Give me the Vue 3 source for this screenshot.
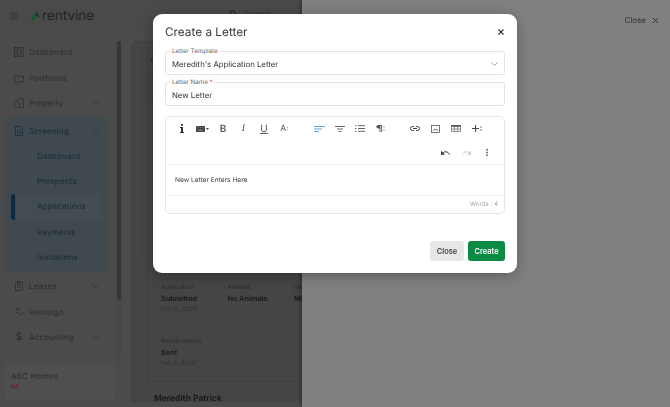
<script setup>
const details = [
  { label: "Application", value: "Submitted", date: "Dec 9, 2025" },
  { label: "Animals", value: "No Animals", date: "" },
  { label: "Identity", value: "Missing", date: "" },
];
</script>

<template>
  <div class="page">
    <div class="backdrop">
      <header class="topbar">
        <svg class="burger" width="8" height="6" viewBox="0 0 8 6"><path d="M0 .5h8M0 3h8M0 5.500h8" stroke="#2c2c2c" stroke-width=".8" /></svg>
        <svg class="logo" width="9" height="12" viewBox="0 0 9 14" preserveAspectRatio="none"><path d="M5 0l4 9-3-2-1 1z" fill="#123a22" /><path d="M4.600 2L1 9 0 14l3-2 2-4z" fill="#0b5a2c" /></svg>
        <span class="brand">rentvine</span>
        <div class="search">
          <svg width="8" height="8" viewBox="0 0 8 8"><circle cx="3.500" cy="3.500" r="2.700" fill="none" stroke="#222" /><path d="M5.500 5.500L8 8" stroke="#222" /></svg>
          <span>Search</span>
        </div>
      </header>

      <div class="body">
        <aside class="sidebar">
          <nav class="nav">
            <a class="nav-row">
              <svg width="10" height="10" viewBox="0 0 10 10" fill="none" stroke="#2f2f2f" stroke-width=".8"><rect x=".5" y=".5" width="3.200" height="4" /><rect x="6" y=".5" width="3.200" height="2.800" /><rect x=".5" y="6.500" width="3.200" height="3" /><rect x="6" y="5.500" width="3.200" height="4" /></svg>
              <span>Dashboard</span>
            </a>
            <a class="nav-row">
              <svg width="10" height="10" viewBox="0 0 10 10" fill="none" stroke="#2f2f2f" stroke-width=".8"><path d="M.5 9V2.500h3l1 1h5V9z" /></svg>
              <span>Portfolios</span>
            </a>
            <a class="nav-row">
              <svg width="10" height="10" viewBox="0 0 10 10" fill="none" stroke="#2f2f2f" stroke-width=".8"><path d="M.5 9.500V5l2.500-2 2.500 2v4.500zM3.500 2.500V.8h6v8.700H6" /></svg>
              <span>Property</span>
              <svg class="chev" width="7" height="4" viewBox="0 0 7 4"><path d="M.5.5l3 3 3-3" fill="none" stroke="#2f2f2f" stroke-width=".8" /></svg>
            </a>

            <section class="screening">
              <a class="nav-row head">
                <svg width="10" height="10" viewBox="0 0 10 10" fill="none" stroke="#17293a" stroke-width=".8"><path d="M1.500 .5h4.500l2.500 2.500v6.500h-7z" /><circle cx="5" cy="6" r="1.600" /></svg>
                <span>Screening</span>
                <svg class="chev" width="7" height="4" viewBox="0 0 7 4"><path d="M.5 3.500l3-3 3 3" fill="none" stroke="#2f2f2f" stroke-width=".8" /></svg>
              </a>
              <a class="sub">Dashboard</a>
              <a class="sub">Prospects</a>
              <a class="sub active">Applications</a>
              <a class="sub">Payments</a>
              <a class="sub">Invitations</a>
            </section>

            <a class="nav-row">
              <svg width="10" height="10" viewBox="0 0 10 10" fill="none" stroke="#2f2f2f" stroke-width=".8"><path d="M1.500 1.200h7v8.300h-7zM3.500 .4h3v1.600h-3zM3.200 4.200h3.600M3.200 6.200h3.600" /></svg>
              <span>Leases</span>
              <svg class="chev" width="7" height="4" viewBox="0 0 7 4"><path d="M.5.5l3 3 3-3" fill="none" stroke="#2f2f2f" stroke-width=".8" /></svg>
            </a>
            <a class="nav-row">
              <svg width="10" height="10" viewBox="0 0 10 10" fill="none" stroke="#2f2f2f" stroke-width=".8"><path d="M1.500 1.500h5M1.500 3.500h5M1.500 5.500h3M5 8.500l4-3" /></svg>
              <span>Rentsign</span>
            </a>
            <a class="nav-row">
              <span class="dollar">$</span>
              <span>Accounting</span>
              <svg class="chev" width="7" height="4" viewBox="0 0 7 4"><path d="M.5.5l3 3 3-3" fill="none" stroke="#2f2f2f" stroke-width=".8" /></svg>
            </a>
          </nav>
          <div class="rail"><div class="thumb"></div></div>
          <div class="account">
            <div class="account-name">ABC Homes</div>
            <div class="account-env">QA</div>
          </div>
        </aside>

        <main class="main">
          <div class="card">
            <div class="inner">
              <svg class="back" width="3" height="5" viewBox="0 0 3 5"><path d="M2.700.3L.5 2.500l2.200 2.200" fill="none" stroke="#222" stroke-width=".8" /></svg>
              <div class="tabs"></div>
              <div class="details">
                <div v-for="d in details" :key="d.label" class="detail">
                  <div class="detail-label">{{ d.label }}</div>
                  <div class="detail-value">{{ d.value }}</div>
                  <div class="detail-date">{{ d.date }}</div>
                </div>
              </div>
              <div class="detail history">
                <div class="detail-label">Rental History</div>
                <div class="detail-value">Sent</div>
                <div class="detail-date">Feb 5, 2026</div>
              </div>
            </div>
            <div class="person">Meredith Patrick</div>
          </div>
        </main>
      </div>
    </div>

    <div class="drawer">
      <span>Close</span>
      <svg width="7" height="7" viewBox="0 0 7 7"><path d="M1 1l5 5M6 1L1 6" stroke="#333" stroke-width="1" /></svg>
    </div>

    <div class="modal">
      <div class="modal-head">
        <h2>Create a Letter</h2>
        <svg width="6" height="6" viewBox="0 0 6 6"><path d="M.5.5l5 5M5.500.5l-5 5" stroke="#333" stroke-width="1.100" /></svg>
      </div>

      <div class="field">
        <label>Letter Template</label>
        <span>Meredith's Application Letter</span>
        <svg width="7" height="4" viewBox="0 0 7 4"><path d="M.5.5l3 3 3-3" fill="none" stroke="#888" stroke-width=".8" /></svg>
      </div>
      <div class="field">
        <label>Letter Name <b>*</b></label>
        <span>New Letter</span>
      </div>

      <div class="editor">
        <div class="tools">
          <div class="group">
            <span class="cell"><svg width="4" height="9" viewBox="0 0 4 9"><path d="M1 0h2v1.800H1zM0 3h3v5h1v1H0V8h1V4H0z" fill="#333" /></svg></span>
            <span class="cell gap1">
              <svg width="9" height="6" viewBox="0 0 9 6"><rect width="9" height="6" rx=".8" fill="#444" /><path d="M1.500 1.700h1M4 1.700h1M6.500 1.700h1M2.500 4.300h4" stroke="#bbb" stroke-width=".7" /></svg>
              <svg width="3" height="2" viewBox="0 0 3 2"><path d="M0 0h3L1.500 2z" fill="#444" /></svg>
            </span>
            <span class="cell bold">B</span>
            <span class="cell ital">I</span>
            <span class="cell under">U</span>
            <span class="cell small-a">A<small>:</small></span>
          </div>
          <div class="group">
            <span class="cell"><svg width="11" height="6" viewBox="0 0 11 6"><path d="M0 .5h11M0 3h8M0 5.500h5" stroke="#4c9be8" stroke-width=".9" /></svg></span>
            <span class="cell"><svg width="10" height="6" viewBox="0 0 10 6"><path d="M0 .5h10M2 3h6M3.500 5.500h3" stroke="#555" stroke-width=".9" /></svg></span>
            <span class="cell"><svg width="10" height="7" viewBox="0 0 10 7"><path d="M0 .7h1.500M0 3.500h1.500M0 6.300h1.500M3 .7h7M3 3.500h7M3 6.300h7" stroke="#555" stroke-width=".9" /></svg></span>
            <span class="cell"><svg width="9" height="7" viewBox="0 0 9 7"><path d="M3.500 0H2.200a1.800 1.800 0 000 3.600h1.300V7h.9V.8h.8V7h.9V0zM7.500 1.500h1v1h-1zM7.500 4.500h1v1h-1z" fill="#555" /></svg></span>
          </div>
          <div class="group">
            <span class="cell"><svg width="10" height="5" viewBox="0 0 10 5" fill="none" stroke="#444" stroke-width="1"><path d="M4 .5H2.500a2 2 0 000 4H4M6 .5h1.500a2 2 0 010 4H6M3 2.500h4" /></svg></span>
            <span class="cell"><svg width="9" height="8" viewBox="0 0 9 8" fill="none" stroke="#555" stroke-width=".8"><rect x=".5" y=".5" width="8" height="7" /><path d="M2 6l1.700-2L5 5.200l.9-.8L7.200 6" /></svg></span>
            <span class="cell"><svg width="10" height="7" viewBox="0 0 10 7"><rect width="10" height="1.800" fill="#555" /><path d="M.4 1.800V7M3.400 1.800V7M6.600 1.800V7M9.600 1.800V7M0 4h10M0 6.600h10" stroke="#666" stroke-width=".7" /></svg></span>
            <span class="cell plus">
              <svg width="10" height="7" viewBox="0 0 10 7"><path d="M0 3.500h7M3.500 0v7" stroke="#444" /><path d="M8.500 1.500h1.200v1.200H8.500zM8.500 4.300h1.200v1.200H8.500z" fill="#555" /></svg>
            </span>
          </div>
        </div>
        <div class="tools second">
          <span class="cell"><svg width="9" height="5" viewBox="0 0 9 5"><path d="M0 .8v4h4z" fill="#333" /><path d="M1.500 3.500C3.500 1 6.500 1 8.500 4.500" fill="none" stroke="#333" stroke-width="1" /></svg></span>
          <span class="cell"><svg width="9" height="5" viewBox="0 0 9 5"><path d="M9 .8v4H5z" fill="#c8c8c8" /><path d="M7.500 3.500C5.500 1 2.500 1 .5 4.500" fill="none" stroke="#c8c8c8" stroke-width="1" /></svg></span>
          <span class="cell"><svg width="2" height="7" viewBox="0 0 2 7"><path d="M.2 0h1.600v1.600H.2zM.2 2.700h1.600v1.600H.2zM.2 5.400h1.600V7H.2z" fill="#555" /></svg></span>
        </div>
        <div class="content">New Letter Enters Here</div>
        <div class="status">Words : 4</div>
      </div>

      <div class="actions">
        <button class="btn-close">Close</button>
        <button class="btn-create">Create</button>
      </div>
    </div>
  </div>
</template>

<style scoped>
.page {
  position: relative;
  width: 670px;
  height: 407px;
  overflow: hidden;
  background: #4b4b4b;
  font-family: Inter, "Liberation Sans", sans-serif;
  text-rendering: geometricPrecision;
}

.backdrop {
  height: 100%;
  display: flex;
  flex-direction: column;
  filter: blur(0.4px);
}

.topbar {
  height: 31px;
  flex: none;
  display: flex;
  align-items: center;
  padding-left: 11px;
  background: #4a4a4a;
}

.burger {
  margin-right: 12px;
}

.logo {
  margin-right: 2px;
}

.brand {
  font-size: 13.500px;
  color: #232323;
}

.search {
  margin-left: 135px;
  display: flex;
  align-items: center;
  gap: 7px;
  font-size: 8px;
  color: #333;
  margin-top: -3px;
}

.body {
  flex: 1;
  display: flex;
  min-height: 0;
}

.sidebar {
  position: relative;
  width: 131px;
  flex: none;
  padding: 8.600px 0 0 5px;
  box-sizing: border-box;
}

.nav {
  width: 102px;
}

.nav-row {
  height: 25.400px;
  display: flex;
  align-items: center;
  gap: 5px;
  padding-left: 9px;
  font-size: 8px;
  color: #2c2c2c;
  letter-spacing: 0.2px;
}

.nav-row svg:first-child {
  flex: none;
}

.chev {
  margin-left: auto;
  margin-right: 8px;
}

.dollar {
  width: 10px;
  text-align: center;
  font-size: 10px;
}

.screening {
  background: #40494e;
  border-radius: 5px;
  margin: 1px 0 2px;
  height: 155px;
  box-sizing: border-box;
  padding-top: 1.500px;
}

.head {
  color: #17293a;
}

.sub {
  display: block;
  position: relative;
  height: 25.400px;
  line-height: 25.400px;
  padding-left: 32px;
  font-size: 8px;
  color: #17293a;
  letter-spacing: 0.2px;
}

.sub.active {
  background: #434c51;
  margin: 0 6px 0 11px;
  padding-left: 21px;
  border-radius: 1px;
}

.sub.active::before {
  content: "";
  position: absolute;
  left: -5px;
  top: 0;
  bottom: 0;
  width: 4px;
  border-radius: 3px 0 0 3px;
  background: #0d2a42;
}

.rail {
  position: absolute;
  left: 115px;
  top: 10px;
  width: 7px;
  height: 317px;
  background: #484848;
}

.thumb {
  width: 4px;
  height: 259px;
  margin-left: 2px;
  background: #363636;
  border-radius: 2px;
}

.account {
  position: absolute;
  left: 5px;
  top: 331px;
  width: 110px;
  height: 39px;
  box-sizing: border-box;
  padding: 9px 6px;
  background: #4f4f4f;
  border-radius: 5px;
}

.account-name {
  font-size: 8px;
  line-height: 10px;
  letter-spacing: 0.2px;
  color: #2c2c2c;
}

.account-env {
  font-size: 5.500px;
  line-height: 7px;
  font-weight: 600;
  color: #6e1f1f;
  margin-top: 3px;
}

.main {
  flex: 1;
  min-width: 0;
  padding-top: 10px;
}

.card {
  height: 361px;
  border: 1px solid #424242;
  border-right: none;
  border-radius: 6px 0 0 0;
  background: #454545;
  box-sizing: border-box;
  padding-left: 15px;
}

.inner {
  height: 340px;
  box-sizing: border-box;
  border-left: 1px solid #3f3f3f;
  border-bottom: 1px solid #3f3f3f;
  padding: 15px 0 0 13px;
}

.back {
  display: block;
  margin-left: -11px;
}

.tabs {
  width: 60px;
  height: 20px;
  margin: 16px 0 0 -13px;
  border: 1px solid #404040;
  border-radius: 3px;
}

.details {
  display: flex;
  margin-top: 184px;
}

.detail {
  width: 66.500px;
  flex: none;
  white-space: nowrap;
}

.detail-label {
  font-size: 6.200px;
  line-height: 8px;
  color: #2b2b2b;
}

.detail-value {
  font-size: 7.200px;
  line-height: 10px;
  font-weight: 700;
  color: #1d1d1d;
  margin-top: 2px;
}

.detail-date {
  font-size: 6.200px;
  line-height: 8px;
  color: #333;
  margin-top: 2px;
}

.history {
  margin-top: 24px;
}

.person {
  margin: 12px 0 0 7px;
  font-size: 8.500px;
  line-height: 11px;
  font-weight: 600;
  color: #161616;
  white-space: nowrap;
}

.drawer {
  position: absolute;
  left: 302px;
  top: 0;
  right: 0;
  bottom: 0;
  background: #808080;
  box-shadow: -2px 0 4px rgba(0, 0, 0, 0.25);
  display: flex;
  justify-content: flex-end;
  align-items: flex-start;
  gap: 6px;
  padding: 15px 11px 0 0;
  font-size: 8px;
  color: #2f2f2f;
}

.drawer svg {
  margin-top: 2px;
}

.modal {
  position: absolute;
  left: 153px;
  top: 14px;
  width: 364px;
  height: 259px;
  box-sizing: border-box;
  padding: 0 12px;
  background: #fff;
  border-radius: 9px;
  box-shadow: 0 3px 14px rgba(0, 0, 0, 0.28);
}

.modal-head {
  height: 37px;
  display: flex;
  align-items: center;
  justify-content: space-between;
  padding: 0 1px 2px 0;
  box-sizing: border-box;
}

.modal-head h2 {
  margin: 0;
  font-size: 11.800px;
  font-weight: 400;
  color: #3a3a3a;
}

.field {
  position: relative;
  height: 24px;
  margin-bottom: 7px;
  display: flex;
  align-items: center;
  justify-content: space-between;
  padding: 1px 6px 0;
  box-sizing: border-box;
  border: 1px solid #e3e3e3;
  border-radius: 3px;
  font-size: 7.800px;
  color: #333;
}

.field label {
  position: absolute;
  left: 5px;
  top: -4px;
  padding: 0 1px;
  background: #fff;
  font-size: 6.200px;
  line-height: 7px;
  color: #666;
}

.field b {
  color: #d33;
  font-weight: 400;
}

.editor {
  margin-top: 10px;
  height: 98px;
  box-sizing: border-box;
  border: 1px solid #e8e8e8;
  border-radius: 5px;
}

.tools {
  height: 23px;
  padding-left: 5.750px;
  display: flex;
  align-items: center;
  color: #555;
  font-size: 10px;
}

.group {
  display: flex;
  align-items: center;
  margin-right: 14px;
}

.cell {
  width: 20.500px;
  flex: none;
  display: flex;
  align-items: center;
  justify-content: center;
}

.gap1 {
  gap: 1px;
}

.small-a {
  font-size: 8.500px;
}

.cell small {
  font-size: 6px;
  margin-left: 0.500px;
  font-weight: 700;
}

.bold {
  font-weight: 600;
}

.ital {
  font-style: italic;
  font-family: "Liberation Serif", serif;
}

.under {
  text-decoration: underline;
}

.second {
  justify-content: flex-end;
  padding: 0 7px 0 0;
  height: 24px;
  border-bottom: 1px solid #f2f2f2;
}

.content {
  height: 30px;
  line-height: 30px;
  padding-left: 9px;
  font-size: 6.600px;
  color: #3d3d3d;
  border-bottom: 1px solid #f2f2f2;
}

.status {
  height: 18px;
  line-height: 18px;
  text-align: right;
  padding-right: 6px;
  font-size: 6.200px;
  color: #a4a4a4;
}

.actions {
  margin-top: 27px;
  display: flex;
  justify-content: flex-end;
  gap: 4px;
}

.actions button {
  height: 20px;
  border: none;
  border-radius: 3px;
  padding: 0;
  font-family: inherit;
  font-size: 7.500px;
  font-weight: 600;
}

.btn-close {
  width: 34px;
  background: #e6e8e8;
  color: #444;
}

.btn-create {
  width: 37px;
  background: #0a8a43;
  color: #fff;
}
</style>
